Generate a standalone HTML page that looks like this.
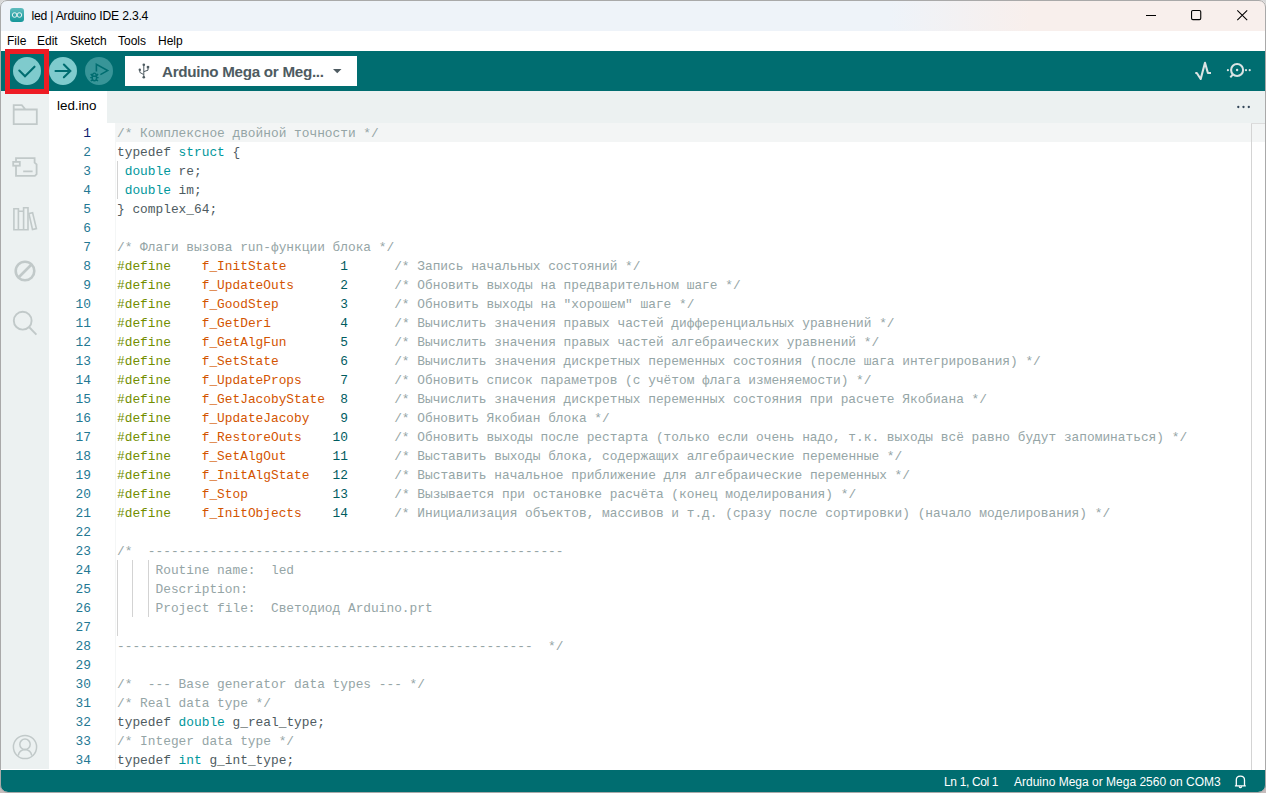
<!DOCTYPE html>
<html><head><meta charset="utf-8">
<style>
*{margin:0;padding:0;box-sizing:border-box}
html,body{width:1266px;height:793px;overflow:hidden;background:linear-gradient(#d8d8d8,#c6bcbc);font-family:"Liberation Sans",sans-serif}
.a{position:absolute}
#win{position:absolute;left:0;top:0;width:1266px;height:792px;background:#fff;border-radius:7px 7px 8px 8px;overflow:hidden}
#bord{position:absolute;left:0;top:0;width:1266px;height:793px;border:1px solid #a9a9a9;border-radius:7px 7px 8px 8px;pointer-events:none}
#title{left:0;top:0;width:1266px;height:31px;background:linear-gradient(90deg,#eef3f9 0,#eef3f9 890px,#f8efec 1030px,#f8efec 100%)}
#ttxt{left:31.5px;top:8.5px;font-size:12.2px;letter-spacing:-0.22px;color:#000;white-space:pre}
#menu{left:0;top:31px;width:1266px;height:20px;background:#fff}
.mi{position:absolute;top:34px;font-size:12px;color:#000}
#tool{left:0;top:51px;width:1266px;height:40px;background:#006d70}
#side{left:0;top:91px;width:49px;height:678px;background:#ecf1f1}
#tabs{left:49px;top:91px;width:1217px;height:32px;background:#ecf1f1}
#tab1{left:49px;top:91px;width:58px;height:32px;background:#fff}
#tabt{left:57px;top:98px;font-size:13.4px;color:#000}
#status{left:0;top:770px;width:1266px;height:22px;background:#006d70}
.st{position:absolute;top:775px;font-size:12px;color:#fff;white-space:pre}
.ln{position:absolute;left:117px;height:19px;line-height:19px;font-family:"Liberation Mono",monospace;font-size:12.83px;color:#4e5b61;white-space:pre}
.num{position:absolute;left:60px;width:31px;text-align:right;height:19px;line-height:19px;font-family:"Liberation Mono",monospace;font-size:12.83px;color:#237893}
.num.cur{color:#0b216f}
.c{color:#95a5a6}.k{color:#00979c}.p{color:#728e00}.m{color:#d35400}.n{color:#005c5f}
.guide{position:absolute;width:1px;background:#d3d3d3}
#curline{left:116px;top:123px;width:1149px;height:19px;background:#f3f5f5}
#vline{left:1251px;top:123px;width:1px;height:647px;background:#d4d4d4}
#gutline{left:115px;top:123px;width:1px;height:646px;background:#f4f6f6}
svg{position:absolute;overflow:visible}
</style></head><body>
<div id="win">
  <div id="title" class="a"></div>
  <svg style="left:10px;top:8px" width="14" height="14" viewBox="0 0 14 14">
    <defs><linearGradient id="ag" x1="0" y1="0" x2="0" y2="1"><stop offset="0" stop-color="#5fbcbe"/><stop offset="1" stop-color="#15979a"/></linearGradient></defs>
    <rect x="0" y="0" width="14" height="14" rx="3" fill="url(#ag)"/>
    <circle cx="4.6" cy="7" r="2.3" fill="none" stroke="#fff" stroke-width="0.85"/>
    <circle cx="9.4" cy="7" r="2.3" fill="none" stroke="#fff" stroke-width="0.85"/>
  </svg>
  <div id="ttxt" class="a">led | Arduino IDE 2.3.4</div>
  <svg style="left:1146px;top:15px" width="11" height="1"><rect x="0" y="0" width="10" height="1" fill="#000"/></svg>
  <svg style="left:1191px;top:10px" width="12" height="12"><rect x="0.55" y="0.55" width="9.2" height="9.1" rx="1.3" fill="none" stroke="#000" stroke-width="1.1"/></svg>
  <svg style="left:1236.5px;top:9.7px" width="12" height="12"><path d="M0.3 0.3 L10.2 10.2 M10.2 0.3 L0.3 10.2" stroke="#000" stroke-width="1.05"/></svg>

  <div id="menu" class="a"></div>
  <div class="mi" style="left:7px">File</div>
  <div class="mi" style="left:37px">Edit</div>
  <div class="mi" style="left:70px">Sketch</div>
  <div class="mi" style="left:118px">Tools</div>
  <div class="mi" style="left:158px">Help</div>

  <div id="tool" class="a"></div>
  <svg style="left:0;top:51px" width="130" height="40" viewBox="0 51 130 40">
    <circle cx="27" cy="71" r="14" fill="#7fcbcd"/>
    <path d="M19.3 70.5 L25 76.2 L34.5 66.7" fill="none" stroke="#006d70" stroke-width="2.1" stroke-linecap="round"/>
    <circle cx="63" cy="71" r="14" fill="#7fcbcd"/>
    <path d="M55.5 71 H70.3 M63.9 64.6 L70.3 71 L63.9 77.3" fill="none" stroke="#006d70" stroke-width="2.1" stroke-linecap="round"/>
    <circle cx="99" cy="71" r="14" fill="#389598"/>
    <path d="M96.4 71.4 V64.4 L107.6 70.6 L100.4 74.6" fill="none" stroke="#006d70" stroke-width="1.6" stroke-linejoin="miter"/>
    <path d="M92.5 75.9 Q92.5 73.1 94.4 73.1 Q96.3 73.1 96.3 75.9 M92.3 76.3 H96.5 V78.6 Q96.5 80.7 94.4 80.7 Q92.3 80.7 92.3 78.6 Z M92.3 76 L90.8 73.8 M96.5 76 L98 73.8 M92.3 77.6 H90.2 M96.5 77.6 H98.6 M92.6 79.6 L90.8 81 M96.2 79.6 L98 81" fill="none" stroke="#006d70" stroke-width="1.45"/>
  </svg>
  <div class="a" style="left:125px;top:56px;width:232px;height:30px;background:#fff"></div>
  <svg style="left:134px;top:60px" width="20" height="22" viewBox="134 60 20 22">
    <path d="M143.8 64.7 V77.4 M139.8 69.7 V72.4 L143.6 74.5 M148 67.1 V70.2 L143.9 71.6" fill="none" stroke="#4e5b61" stroke-width="1"/>
    <circle cx="143.8" cy="64.8" r="1.3" fill="#4e5b61"/><circle cx="143.8" cy="77.3" r="1.3" fill="#4e5b61"/>
    <circle cx="139.8" cy="69.8" r="1.2" fill="#4e5b61"/><rect x="146.8" y="65.9" width="2.4" height="2.4" fill="#4e5b61"/>
  </svg>
  <div class="a" style="left:162px;top:62.5px;font-size:15.2px;letter-spacing:-0.28px;font-weight:bold;color:#4e5b61;white-space:pre">Arduino Mega or Meg...</div>
  <svg style="left:333px;top:69px" width="9" height="5"><path d="M0 0 H8.5 L4.25 4.3Z" fill="#4e5b61"/></svg>
  <svg style="left:1194px;top:61px" width="18" height="20" viewBox="1194 61 18 20">
    <path d="M1195.3 73 L1196.8 73 L1200.7 79 L1205 62.8 L1207.9 73 L1211 73" fill="none" stroke="#dae3e3" stroke-width="2.1" stroke-linejoin="round"/>
  </svg>
  <svg style="left:1226px;top:62px" width="26" height="18" viewBox="1226 62 26 18">
    <circle cx="1237.1" cy="70" r="6" fill="none" stroke="#dae3e3" stroke-width="2.1"/>
    <circle cx="1237.1" cy="70" r="1.2" fill="#dae3e3"/>
    <path d="M1232.8 74.5 L1230.3 77.3" stroke="#dae3e3" stroke-width="2"/>
    <circle cx="1227.9" cy="70.2" r="1.1" fill="#dae3e3"/>
    <circle cx="1246" cy="70.2" r="1.1" fill="#dae3e3"/>
    <circle cx="1249.7" cy="70.2" r="1.1" fill="#dae3e3"/>
  </svg>

  <div id="side" class="a"></div>
  <svg style="left:0;top:91px" width="49" height="678" viewBox="0 91 49 678">
    <g fill="none" stroke="#c1c9c9" stroke-width="1.8">
      <path d="M13.7 124.2 V105.2 H21.8 L25.5 109.5 H36.8 V124.2 Z M13.7 109.5 H25.5"/>
      <path d="M16 161.2 V158.2 H34.6 V162.6 L36.6 164.4 V174.2 L34.9 175.8 H16 V165.8"/>
      <rect x="13.2" y="161.9" width="6.6" height="3.8"/>
      <path d="M23.2 171.3 H32.6"/>
      <path d="M13.9 229.8 V208.8 H18.4 V229.8 M18.4 211.2 H23.6 M23.6 229.8 V207.8 H28 V229.8 M13.9 229.8 H28" stroke-width="1.6" stroke-linecap="square"/>
      <path d="M28.9 213.6 L32.6 212.8 L36.4 228.6 L32.5 229.5 Z" stroke-width="1.6"/>
      <circle cx="25" cy="271" r="9.3" stroke-width="2.6"/>
      <path d="M18.5 277.5 L31.5 264.5" stroke-width="2.6"/>
      <circle cx="22.7" cy="320.7" r="8.9" stroke-width="1.9"/>
      <path d="M29 327 L36.4 334.6" stroke-width="1.9"/>
      <circle cx="25" cy="747" r="11.6" stroke-width="1.5"/>
      <circle cx="25" cy="744.3" r="5.2" stroke-width="1.5"/>
      <path d="M18.2 755.5 Q19.5 749.8 25 749.6 Q30.5 749.8 31.8 755.5" stroke-width="1.5"/>
    </g>
  </svg>
  <div id="tabs" class="a"></div>
  <div id="tab1" class="a"></div>
  <div id="tabt" class="a">led.ino</div>
  <svg style="left:1231px;top:100.9px" width="25" height="12"><circle cx="7.3" cy="6" r="1.15" fill="#34475a"/><circle cx="12.5" cy="6" r="1.15" fill="#34475a"/><circle cx="17.8" cy="6" r="1.15" fill="#34475a"/></svg>

  <div id="gutline" class="a"></div>
  <div id="curline" class="a"></div>
  <div id="vline" class="a"></div>
  <div class="a" style="left:1251px;top:123px;width:14px;height:1px;background:#dcdcdc"></div>
<div class="guide" style="left:117.0px;top:161px;height:38px"></div>
<div class="guide" style="left:117.0px;top:560px;height:76px"></div>
<div class="guide" style="left:132.4px;top:560px;height:57px"></div>
<div class="guide" style="left:147.8px;top:560px;height:57px"></div>
<div class="ln" style="top:124px"><span class="c">/* Комплексное двойной точности */</span></div>
<div class="num cur" style="top:124px">1</div>
<div class="ln" style="top:143px">typedef <span class="k">struct</span> {</div>
<div class="num" style="top:143px">2</div>
<div class="ln" style="top:162px"> <span class="k">double</span> re;</div>
<div class="num" style="top:162px">3</div>
<div class="ln" style="top:181px"> <span class="k">double</span> im;</div>
<div class="num" style="top:181px">4</div>
<div class="ln" style="top:200px">} complex_64;</div>
<div class="num" style="top:200px">5</div>
<div class="ln" style="top:219px"></div>
<div class="num" style="top:219px">6</div>
<div class="ln" style="top:238px"><span class="c">/* Флаги вызова run-функции блока */</span></div>
<div class="num" style="top:238px">7</div>
<div class="ln" style="top:257px"><span class="p">#define</span>    <span class="m">f_InitState</span>       <span class="n">1</span>      <span class="c">/* Запись начальных состояний */</span></div>
<div class="num" style="top:257px">8</div>
<div class="ln" style="top:276px"><span class="p">#define</span>    <span class="m">f_UpdateOuts</span>      <span class="n">2</span>      <span class="c">/* Обновить выходы на предварительном шаге */</span></div>
<div class="num" style="top:276px">9</div>
<div class="ln" style="top:295px"><span class="p">#define</span>    <span class="m">f_GoodStep</span>        <span class="n">3</span>      <span class="c">/* Обновить выходы на "хорошем" шаге */</span></div>
<div class="num" style="top:295px">10</div>
<div class="ln" style="top:314px"><span class="p">#define</span>    <span class="m">f_GetDeri</span>         <span class="n">4</span>      <span class="c">/* Вычислить значения правых частей дифференциальных уравнений */</span></div>
<div class="num" style="top:314px">11</div>
<div class="ln" style="top:333px"><span class="p">#define</span>    <span class="m">f_GetAlgFun</span>       <span class="n">5</span>      <span class="c">/* Вычислить значения правых частей алгебраических уравнений */</span></div>
<div class="num" style="top:333px">12</div>
<div class="ln" style="top:352px"><span class="p">#define</span>    <span class="m">f_SetState</span>        <span class="n">6</span>      <span class="c">/* Вычислить значения дискретных переменных состояния (после шага интегрирования) */</span></div>
<div class="num" style="top:352px">13</div>
<div class="ln" style="top:371px"><span class="p">#define</span>    <span class="m">f_UpdateProps</span>     <span class="n">7</span>      <span class="c">/* Обновить список параметров (с учётом флага изменяемости) */</span></div>
<div class="num" style="top:371px">14</div>
<div class="ln" style="top:390px"><span class="p">#define</span>    <span class="m">f_GetJacobyState</span>  <span class="n">8</span>      <span class="c">/* Вычислить значения дискретных переменных состояния при расчете Якобиана */</span></div>
<div class="num" style="top:390px">15</div>
<div class="ln" style="top:409px"><span class="p">#define</span>    <span class="m">f_UpdateJacoby</span>    <span class="n">9</span>      <span class="c">/* Обновить Якобиан блока */</span></div>
<div class="num" style="top:409px">16</div>
<div class="ln" style="top:428px"><span class="p">#define</span>    <span class="m">f_RestoreOuts</span>    <span class="n">10</span>      <span class="c">/* Обновить выходы после рестарта (только если очень надо, т.к. выходы всё равно будут запоминаться) */</span></div>
<div class="num" style="top:428px">17</div>
<div class="ln" style="top:447px"><span class="p">#define</span>    <span class="m">f_SetAlgOut</span>      <span class="n">11</span>      <span class="c">/* Выставить выходы блока, содержащих алгебраические переменные */</span></div>
<div class="num" style="top:447px">18</div>
<div class="ln" style="top:466px"><span class="p">#define</span>    <span class="m">f_InitAlgState</span>   <span class="n">12</span>      <span class="c">/* Выставить начальное приближение для алгебраические переменных */</span></div>
<div class="num" style="top:466px">19</div>
<div class="ln" style="top:485px"><span class="p">#define</span>    <span class="m">f_Stop</span>           <span class="n">13</span>      <span class="c">/* Вызывается при остановке расчёта (конец моделирования) */</span></div>
<div class="num" style="top:485px">20</div>
<div class="ln" style="top:504px"><span class="p">#define</span>    <span class="m">f_InitObjects</span>    <span class="n">14</span>      <span class="c">/* Инициализация объектов, массивов и т.д. (сразу после сортировки) (начало моделирования) */</span></div>
<div class="num" style="top:504px">21</div>
<div class="ln" style="top:523px"></div>
<div class="num" style="top:523px">22</div>
<div class="ln" style="top:542px"><span class="c">/*  ------------------------------------------------------</span></div>
<div class="num" style="top:542px">23</div>
<div class="ln" style="top:561px"><span class="c">     Routine name:  led</span></div>
<div class="num" style="top:561px">24</div>
<div class="ln" style="top:580px"><span class="c">     Description:</span></div>
<div class="num" style="top:580px">25</div>
<div class="ln" style="top:599px"><span class="c">     Project file:  Светодиод Arduino.prt</span></div>
<div class="num" style="top:599px">26</div>
<div class="ln" style="top:618px"><span class="c"></span></div>
<div class="num" style="top:618px">27</div>
<div class="ln" style="top:637px"><span class="c">------------------------------------------------------  */</span></div>
<div class="num" style="top:637px">28</div>
<div class="ln" style="top:656px"></div>
<div class="num" style="top:656px">29</div>
<div class="ln" style="top:675px"><span class="c">/*  --- Base generator data types --- */</span></div>
<div class="num" style="top:675px">30</div>
<div class="ln" style="top:694px"><span class="c">/* Real data type */</span></div>
<div class="num" style="top:694px">31</div>
<div class="ln" style="top:713px">typedef <span class="k">double</span> g_real_type;</div>
<div class="num" style="top:713px">32</div>
<div class="ln" style="top:732px"><span class="c">/* Integer data type */</span></div>
<div class="num" style="top:732px">33</div>
<div class="ln" style="top:751px">typedef <span class="k">int</span> g_int_type;</div>
<div class="num" style="top:751px">34</div>

  <div id="status" class="a"></div>
  <div class="st" style="left:944px;letter-spacing:-0.35px">Ln 1, Col 1</div>
  <div class="st" style="left:1014px">Arduino Mega or Mega 2560 on COM3</div>
  <svg style="left:1226px;top:771.5px" width="30" height="20" viewBox="1226 771 30 20">
    <path d="M1236.3 784.6 V779 Q1236.3 775.1 1240.4 775.1 Q1244.5 775.1 1244.5 779 V784.6 M1234.9 784.9 H1245.8" fill="none" stroke="#fff" stroke-width="1.3"/>
    <path d="M1239 785.4 Q1240.4 787.8 1241.8 785.4" fill="none" stroke="#fff" stroke-width="1.2"/>
  </svg>
  <div class="a" style="left:5px;top:49px;width:44px;height:45px;border:5px solid #ed1c24"></div>
</div>
<div id="bord"></div>
</body></html>
